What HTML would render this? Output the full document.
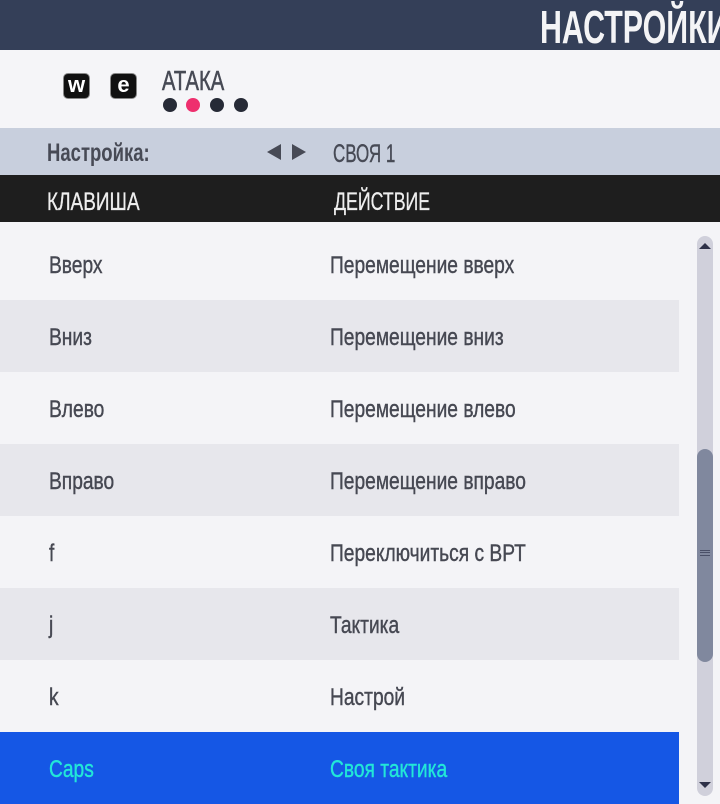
<!DOCTYPE html><html><head><meta charset="utf-8"><style>
*{margin:0;padding:0;box-sizing:border-box}
body{width:720px;height:804px;overflow:hidden;background:#f4f4f7;font-family:"Liberation Sans",sans-serif;position:relative}
.a{position:absolute;white-space:nowrap}
.t{display:inline-block;transform:scaleX(0.8);transform-origin:left center}
.row{position:absolute;left:0;width:679px;height:72px}
.row .k,.row .v{position:absolute;top:24px;font-size:24px;color:#464852;line-height:28px;-webkit-text-stroke:0.4px #464852}
.row .k{left:49px}.row .v{left:330px}
.g{background:#e7e7ec}
.sel{background:#1557e5}
.sel .k,.sel .v{color:#22e6d8;-webkit-text-stroke:0.4px #22e6d8}
.key{position:absolute;top:74px;width:25px;height:24px;background:#111;border-radius:4px;color:#fff;font-weight:bold;font-size:22px;text-align:center;line-height:21px;box-shadow:0 0 0 1px #888}
.dot{position:absolute;top:98px;width:14px;height:14px;border-radius:50%;background:#262a36}
</style></head><body>
<div class="a" style="left:0;top:0;width:720px;height:50px;background:#343f58"></div>
<div class="a" style="left:540px;top:3px;font-size:46px;color:#f4f4f6;line-height:48px;font-weight:bold"><span class="t" style="transform:scaleX(0.66)">НАСТРОЙКИ</span></div>
<div class="a" style="left:0;top:50px;width:720px;height:78px;background:#f5f5f8"></div>
<div class="key" style="left:64px">w</div>
<div class="key" style="left:111px">e</div>
<div class="a" style="left:162px;top:66px;font-size:28px;color:#474a55;line-height:30px;-webkit-text-stroke:0.6px #474a55"><span class="t" style="transform:scaleX(0.72)">АТАКА</span></div>
<div class="dot" style="left:163px"></div><div class="dot" style="left:186px;background:#ee2f6e"></div><div class="dot" style="left:210px"></div><div class="dot" style="left:234px"></div>
<div class="a" style="left:0;top:128px;width:720px;height:47px;background:#c8cfdd"></div>
<div class="a" style="left:47px;top:139px;font-size:25px;color:#474a55;font-weight:bold;line-height:28px"><span class="t" style="transform:scaleX(0.74)">Настройка:</span></div>
<svg class="a" style="left:267px;top:143px" width="40" height="18"><path d="M0 9L14 1V17Z M25 1L39 9L25 17Z" fill="#474a55"/></svg>
<div class="a" style="left:333px;top:140px;font-size:25px;color:#474a55;line-height:28px;-webkit-text-stroke:0.4px #474a55"><span class="t" style="transform:scaleX(0.68)">СВОЯ 1</span></div>
<div class="a" style="left:0;top:175px;width:720px;height:47px;background:#1e1e1e"></div>
<div class="a" style="left:47px;top:188px;font-size:25px;color:#eee;line-height:28px;-webkit-text-stroke:0.3px #eee"><span class="t" style="transform:scaleX(0.76)">КЛАВИША</span></div>
<div class="a" style="left:334px;top:188px;font-size:25px;color:#eee;line-height:28px;-webkit-text-stroke:0.3px #eee"><span class="t" style="transform:scaleX(0.71)">ДЕЙСТВИЕ</span></div>

<div class="row" style="top:228px"><span class="k"><span class="t">Вверх</span></span><span class="v"><span class="t">Перемещение вверх</span></span></div>
<div class="row g" style="top:300px"><span class="k"><span class="t">Вниз</span></span><span class="v"><span class="t">Перемещение вниз</span></span></div>
<div class="row" style="top:372px"><span class="k"><span class="t">Влево</span></span><span class="v"><span class="t">Перемещение влево</span></span></div>
<div class="row g" style="top:444px"><span class="k"><span class="t">Вправо</span></span><span class="v"><span class="t">Перемещение вправо</span></span></div>
<div class="row" style="top:516px"><span class="k"><span class="t">f</span></span><span class="v"><span class="t">Переключиться с ВРТ</span></span></div>
<div class="row g" style="top:588px"><span class="k"><span class="t">j</span></span><span class="v"><span class="t">Тактика</span></span></div>
<div class="row" style="top:660px"><span class="k"><span class="t">k</span></span><span class="v"><span class="t">Настрой</span></span></div>
<div class="row sel" style="top:732px"><span class="k"><span class="t">Caps</span></span><span class="v"><span class="t">Своя тактика</span></span></div>

<div class="a" style="left:697px;top:236px;width:16px;height:560px;border-radius:8px;background:#d0d0db"></div>
<div class="a" style="left:697px;top:449px;width:16px;height:213px;border-radius:8px;background:#80889e"></div>
<div class="a" style="left:700px;top:550px;width:10px;height:6px;border-top:1px solid #4a5068;border-bottom:1px solid #4a5068"></div>
<div class="a" style="left:700px;top:552px;width:10px;height:1px;background:#4a5068"></div>
<svg class="a" style="left:699px;top:243px" width="12" height="7"><path d="M0 6L6 0L12 6Z" fill="#2e3148"/></svg>
<svg class="a" style="left:699px;top:782px" width="12" height="7"><path d="M0 0L12 0L6 6Z" fill="#2e3148"/></svg>
</body></html>
